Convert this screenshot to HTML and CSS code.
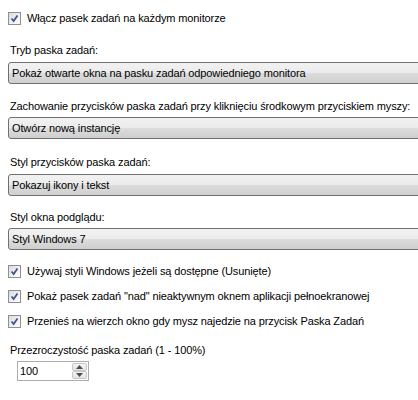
FILE: index.html
```html
<!DOCTYPE html>
<html>
<head>
<meta charset="utf-8">
<link rel="stylesheet" href="styles.css">
</head>
<body>
<div class="page">
  <label class="check c1"><span class="box"><svg viewBox="0 0 13 13" width="13" height="13"><path d="M3 6.5 L5.5 9.5 L10 3" fill="none" stroke="#3d518a" stroke-width="2"/></svg></span><span class="txt">Włącz pasek zadań na każdym monitorze</span></label>

  <div class="lbl l1">Tryb paska zadań:</div>
  <div class="combo">Pokaż otwarte okna na pasku zadań odpowiedniego monitora</div>

  <div class="lbl l2">Zachowanie przycisków paska zadań przy kliknięciu środkowym przyciskiem myszy:</div>
  <div class="combo">Otwórz nową instancję</div>

  <div class="lbl l3">Styl przycisków paska zadań:</div>
  <div class="combo">Pokazuj ikony i tekst</div>

  <div class="lbl l4">Styl okna podglądu:</div>
  <div class="combo">Styl Windows 7</div>

  <label class="check c2"><span class="box"><svg viewBox="0 0 13 13" width="13" height="13"><path d="M3 6.5 L5.5 9.5 L10 3" fill="none" stroke="#3d518a" stroke-width="2"/></svg></span><span class="txt">Używaj styli Windows jeżeli są dostępne (Usunięte)</span></label>
  <label class="check c3"><span class="box"><svg viewBox="0 0 13 13" width="13" height="13"><path d="M3 6.5 L5.5 9.5 L10 3" fill="none" stroke="#3d518a" stroke-width="2"/></svg></span><span class="txt">Pokaż pasek zadań "nad" nieaktywnym oknem aplikacji pełnoekranowej</span></label>
  <label class="check c4"><span class="box"><svg viewBox="0 0 13 13" width="13" height="13"><path d="M3 6.5 L5.5 9.5 L10 3" fill="none" stroke="#3d518a" stroke-width="2"/></svg></span><span class="txt">Przenieś na wierzch okno gdy mysz najedzie na przycisk Paska Zadań</span></label>

  <div class="lbl l5">Przezroczystość paska zadań (1 - 100%)</div>
  <div class="spin">
    <span class="val">100</span>
    <span class="arrows">
      <span class="btn up"><svg viewBox="0 0 7 4" width="7" height="4"><path d="M0 4 L3.5 0 L7 4 Z" fill="#4d4d4d"/></svg></span>
      <span class="btn down"><svg viewBox="0 0 7 4" width="7" height="4"><path d="M0 0 L3.5 4 L7 0 Z" fill="#4d4d4d"/></svg></span>
    </span>
  </div>
</div>
</body>
</html>
```
FILE: styles.css
```css
html, body {
  margin: 0;
  padding: 0;
  background: #ffffff;
  overflow: hidden;
}
body {
  width: 418px;
  height: 400px;
  font-family: "Liberation Sans", Arial, sans-serif;
  font-size: 11px;
  letter-spacing: -0.12px;
  color: #000;
}
.page {
  display: flex;
  flex-direction: column;
  align-items: flex-start;
  padding: 12px 0 0 8px;
}
.check {
  display: flex;
  align-items: center;
  height: 13px;
  gap: 6px;
  white-space: nowrap;
}
.box {
  width: 11px;
  height: 11px;
  border: 1px solid #8e8f8f;
  background: linear-gradient(135deg, #dcdcdc, #ffffff);
  display: flex;
  align-items: center;
  justify-content: center;
}
.box svg {
  width: 11px;
  height: 11px;
}
.txt {
  line-height: 13px;
}
.lbl {
  height: 14px;
  line-height: 14px;
  padding-left: 2px;
  white-space: nowrap;
}
.l1 { margin-top: 18px; }
.l2 { margin-top: 15px; }
.l3 { margin-top: 16px; }
.l4 { margin-top: 14px; }
.lbl + .combo { margin-top: 5px; }
.l2 + .combo, .l4 + .combo { margin-top: 4px; }
.combo {
  width: 430px;
  height: 20px;
  line-height: 20px;
  border: 1px solid #707070;
  border-radius: 3px;
  padding-left: 3px;
  box-sizing: content-box;
  background: linear-gradient(to bottom, #f2f2f2 0%, #ebebeb 50%, #dddddd 50%, #cfcfcf 100%);
  white-space: nowrap;
}
.c2 { margin-top: 15px; }
.c3 { margin-top: 12px; }
.c4 { margin-top: 12px; }
.l5 { margin-top: 15px; }
.spin {
  margin-top: 4px;
  margin-left: 9px;
  width: 70px;
  height: 18px;
  border: 1px solid #abadb3;
  display: flex;
  align-items: stretch;
  justify-content: space-between;
}
.val {
  line-height: 18px;
  padding-left: 2px;
}
.arrows {
  display: flex;
  flex-direction: column;
  width: 15px;
  padding: 1px;
}
.btn {
  flex: 1;
  display: flex;
  align-items: center;
  justify-content: center;
  border: 1px solid #c7c7c7;
  border-radius: 2px;
  background: linear-gradient(to bottom, #f5f5f5, #e3e3e3);
}
```
